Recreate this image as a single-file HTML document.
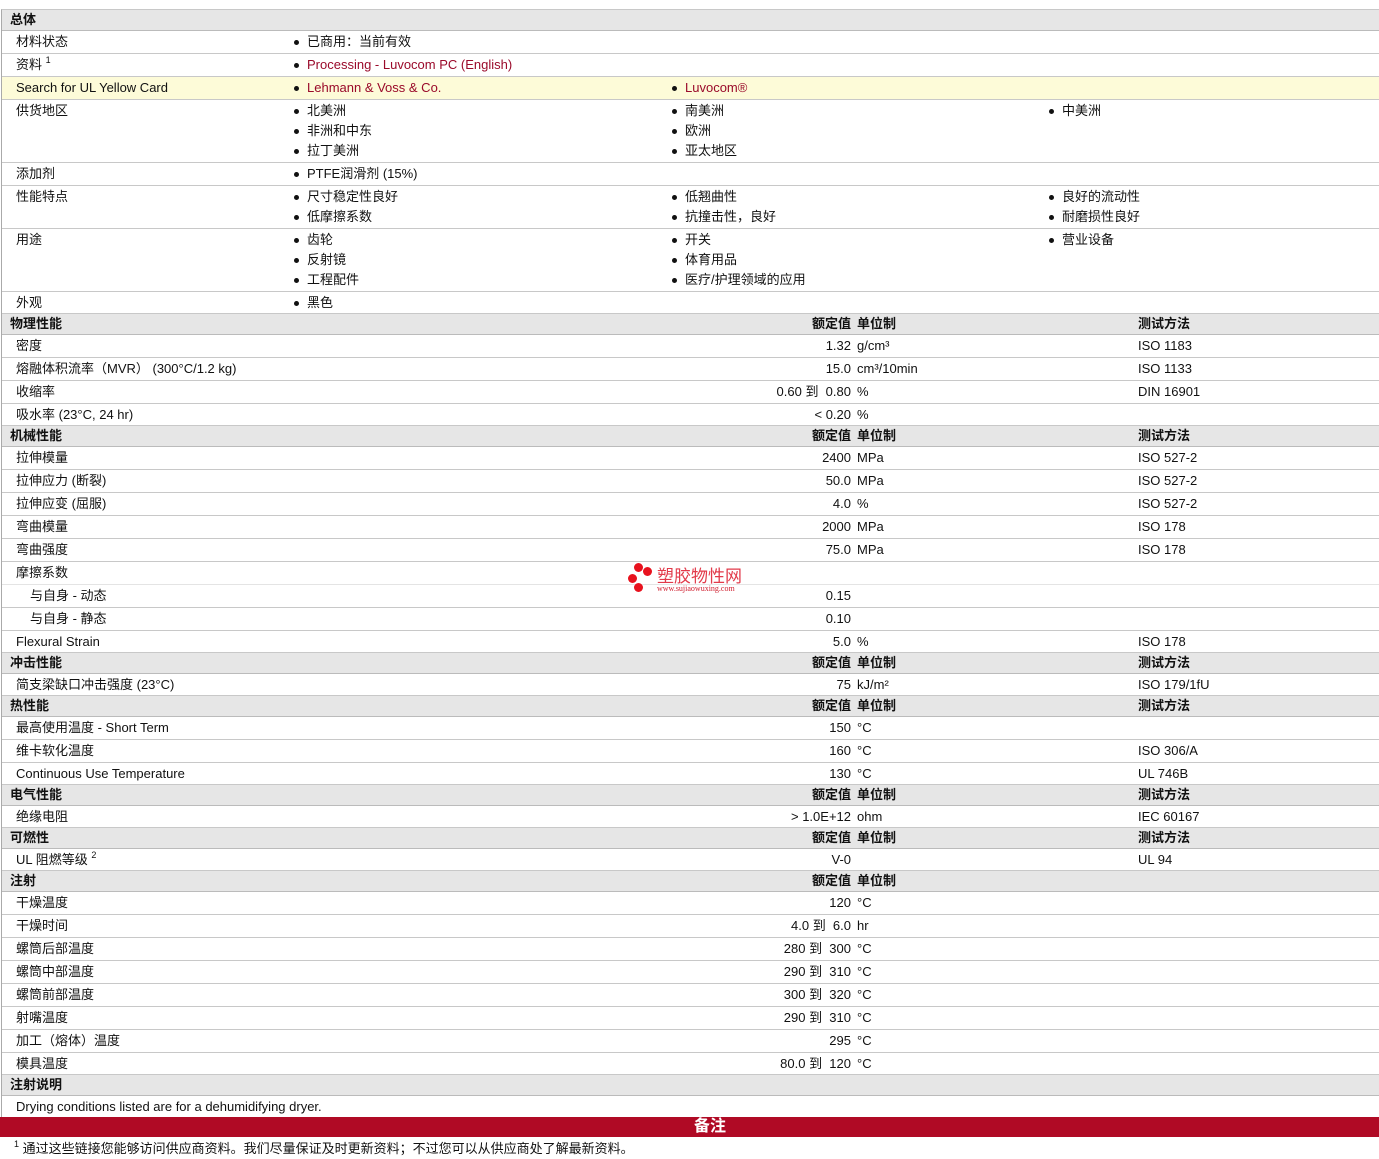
<!DOCTYPE html>
<html><head><meta charset="utf-8"><style>
*{margin:0;padding:0;box-sizing:border-box}
body{width:1379px;height:1157px;background:#fff;font-family:"Liberation Sans","Noto Sans CJK SC",sans-serif;font-size:13px;color:#111;position:relative;overflow:hidden}
#t{position:absolute;left:1px;top:9px;width:1378px;border-left:1px solid #aaa;border-top:1px solid #c8c8c8}
.r{position:relative;height:23px;border-bottom:1px solid #c8c8c8;line-height:22px}
.h{position:relative;height:21px;background:#e6e6e6;border-bottom:1px solid #bbb;line-height:20px;font-weight:bold}
.y{background:#fdfbd8}
.a{position:absolute}
.l{left:14px}.ht{left:8px}
.v{right:528px;text-align:right}
.u{left:855px}.m{left:1136px}
.c1,.c2,.c3{position:absolute;top:0}
.c1{left:289px}.c2{left:667px}.c3{left:1044px}
.b{padding-left:16px;position:relative;height:20px;line-height:22px}
.b:before{content:"";position:absolute;left:3px;top:9px;width:5px;height:5px;border-radius:50%;background:#111}
.red{color:#9a0a2a}
sup{font-size:9px;vertical-align:6px;line-height:0}
</style></head><body>
<div id="t">
<div class="h"><span class="a ht">总体</span></div>
<div class="r"><span class="a l">材料状态</span><div class="c1"><div class="b">已商用：当前有效</div></div></div>
<div class="r"><span class="a l">资料 <sup>1</sup></span><div class="c1"><div class="b red">Processing - Luvocom PC (English)</div></div></div>
<div class="r y"><span class="a l">Search for UL Yellow Card</span><div class="c1"><div class="b red">Lehmann &amp; Voss &amp; Co.</div></div><div class="c2"><div class="b red">Luvocom®</div></div></div>
<div class="r" style="height:63px"><span class="a l">供货地区</span><div class="c1"><div class="b">北美洲</div><div class="b">非洲和中东</div><div class="b">拉丁美洲</div></div><div class="c2"><div class="b">南美洲</div><div class="b">欧洲</div><div class="b">亚太地区</div></div><div class="c3"><div class="b">中美洲</div></div></div>
<div class="r"><span class="a l">添加剂</span><div class="c1"><div class="b">PTFE润滑剂 (15%)</div></div></div>
<div class="r" style="height:43px"><span class="a l">性能特点</span><div class="c1"><div class="b">尺寸稳定性良好</div><div class="b">低摩擦系数</div></div><div class="c2"><div class="b">低翘曲性</div><div class="b">抗撞击性，良好</div></div><div class="c3"><div class="b">良好的流动性</div><div class="b">耐磨损性良好</div></div></div>
<div class="r" style="height:63px"><span class="a l">用途</span><div class="c1"><div class="b">齿轮</div><div class="b">反射镜</div><div class="b">工程配件</div></div><div class="c2"><div class="b">开关</div><div class="b">体育用品</div><div class="b">医疗/护理领域的应用</div></div><div class="c3"><div class="b">营业设备</div></div></div>
<div class="r" style="height:22px"><span class="a l">外观</span><div class="c1"><div class="b">黑色</div></div></div>

<div class="h"><span class="a ht">物理性能</span><span class="a v">额定值</span><span class="a u">单位制</span><span class="a m">测试方法</span></div>
<div class="r"><span class="a l">密度</span><span class="a v">1.32</span><span class="a u">g/cm³</span><span class="a m">ISO 1183</span></div>
<div class="r"><span class="a l">熔融体积流率（MVR） (300°C/1.2 kg)</span><span class="a v">15.0</span><span class="a u">cm³/10min</span><span class="a m">ISO 1133</span></div>
<div class="r"><span class="a l">收缩率</span><span class="a v">0.60 到 &nbsp;0.80</span><span class="a u">%</span><span class="a m">DIN 16901</span></div>
<div class="r" style="height:22px"><span class="a l">吸水率 (23°C, 24 hr)</span><span class="a v">&lt; 0.20</span><span class="a u">%</span></div>

<div class="h"><span class="a ht">机械性能</span><span class="a v">额定值</span><span class="a u">单位制</span><span class="a m">测试方法</span></div>
<div class="r"><span class="a l">拉伸模量</span><span class="a v">2400</span><span class="a u">MPa</span><span class="a m">ISO 527-2</span></div>
<div class="r"><span class="a l">拉伸应力 (断裂)</span><span class="a v">50.0</span><span class="a u">MPa</span><span class="a m">ISO 527-2</span></div>
<div class="r"><span class="a l">拉伸应变 (屈服)</span><span class="a v">4.0</span><span class="a u">%</span><span class="a m">ISO 527-2</span></div>
<div class="r"><span class="a l">弯曲模量</span><span class="a v">2000</span><span class="a u">MPa</span><span class="a m">ISO 178</span></div>
<div class="r"><span class="a l">弯曲强度</span><span class="a v">75.0</span><span class="a u">MPa</span><span class="a m">ISO 178</span></div>
<div class="r" style="border-bottom-color:#e4e4e4"><span class="a l">摩擦系数</span></div>
<div class="r"><span class="a" style="left:28px">与自身 - 动态</span><span class="a v">0.15</span></div>
<div class="r"><span class="a" style="left:28px">与自身 - 静态</span><span class="a v">0.10</span></div>
<div class="r" style="height:22px"><span class="a l">Flexural Strain</span><span class="a v">5.0</span><span class="a u">%</span><span class="a m">ISO 178</span></div>

<div class="h"><span class="a ht">冲击性能</span><span class="a v">额定值</span><span class="a u">单位制</span><span class="a m">测试方法</span></div>
<div class="r" style="height:22px"><span class="a l">简支梁缺口冲击强度 (23°C)</span><span class="a v">75</span><span class="a u">kJ/m²</span><span class="a m">ISO 179/1fU</span></div>

<div class="h"><span class="a ht">热性能</span><span class="a v">额定值</span><span class="a u">单位制</span><span class="a m">测试方法</span></div>
<div class="r"><span class="a l">最高使用温度 - Short Term</span><span class="a v">150</span><span class="a u">°C</span></div>
<div class="r"><span class="a l">维卡软化温度</span><span class="a v">160</span><span class="a u">°C</span><span class="a m">ISO 306/A</span></div>
<div class="r" style="height:22px"><span class="a l">Continuous Use Temperature</span><span class="a v">130</span><span class="a u">°C</span><span class="a m">UL 746B</span></div>

<div class="h"><span class="a ht">电气性能</span><span class="a v">额定值</span><span class="a u">单位制</span><span class="a m">测试方法</span></div>
<div class="r" style="height:22px"><span class="a l">绝缘电阻</span><span class="a v">&gt; 1.0E+12</span><span class="a u">ohm</span><span class="a m">IEC 60167</span></div>

<div class="h"><span class="a ht">可燃性</span><span class="a v">额定值</span><span class="a u">单位制</span><span class="a m">测试方法</span></div>
<div class="r" style="height:22px"><span class="a l">UL 阻燃等级 <sup>2</sup></span><span class="a v">V-0</span><span class="a m">UL 94</span></div>

<div class="h"><span class="a ht">注射</span><span class="a v">额定值</span><span class="a u">单位制</span></div>
<div class="r"><span class="a l">干燥温度</span><span class="a v">120</span><span class="a u">°C</span></div>
<div class="r"><span class="a l">干燥时间</span><span class="a v">4.0 到 &nbsp;6.0</span><span class="a u">hr</span></div>
<div class="r"><span class="a l">螺筒后部温度</span><span class="a v">280 到 &nbsp;300</span><span class="a u">°C</span></div>
<div class="r"><span class="a l">螺筒中部温度</span><span class="a v">290 到 &nbsp;310</span><span class="a u">°C</span></div>
<div class="r"><span class="a l">螺筒前部温度</span><span class="a v">300 到 &nbsp;320</span><span class="a u">°C</span></div>
<div class="r"><span class="a l">射嘴温度</span><span class="a v">290 到 &nbsp;310</span><span class="a u">°C</span></div>
<div class="r"><span class="a l">加工（熔体）温度</span><span class="a v">295</span><span class="a u">°C</span></div>
<div class="r" style="height:22px"><span class="a l">模具温度</span><span class="a v">80.0 到 &nbsp;120</span><span class="a u">°C</span></div>

<div class="h"><span class="a ht">注射说明</span></div>
<div class="r" style="border-bottom:none"><span class="a l">Drying conditions listed are for a dehumidifying dryer.</span></div>
</div>
<div style="position:absolute;left:0;top:1117px;width:1379px;height:20px;background:#b00a25;color:#fff;font-size:16px;line-height:20px;font-weight:bold"><span style="position:absolute;left:694px">备注</span></div>
<div style="position:absolute;left:14px;top:1139px;font-size:13px;line-height:20px"><sup>1</sup> 通过这些链接您能够访问供应商资料。我们尽量保证及时更新资料；不过您可以从供应商处了解最新资料。</div>
<div style="position:absolute;left:626px;top:561px;width:130px;height:36px">
<div style="position:absolute;left:8px;top:2px;width:9px;height:9px;border-radius:50%;background:#e8121e"></div>
<div style="position:absolute;left:17px;top:6px;width:9px;height:9px;border-radius:50%;background:#e8121e"></div>
<div style="position:absolute;left:2px;top:13px;width:9px;height:9px;border-radius:50%;background:#e8121e"></div>
<div style="position:absolute;left:8px;top:22px;width:9px;height:9px;border-radius:50%;background:#e8121e"></div>
<div style="position:absolute;left:31px;top:4px;color:#e23a4a;font-size:17px;line-height:20px;font-family:'Noto Sans CJK SC',sans-serif">塑胶物性网</div>
<div style="position:absolute;left:31px;top:23px;color:#d02030;font-size:8px;font-family:'Liberation Serif',serif">www.sujiaowuxing.com</div>
</div>
</body></html>
